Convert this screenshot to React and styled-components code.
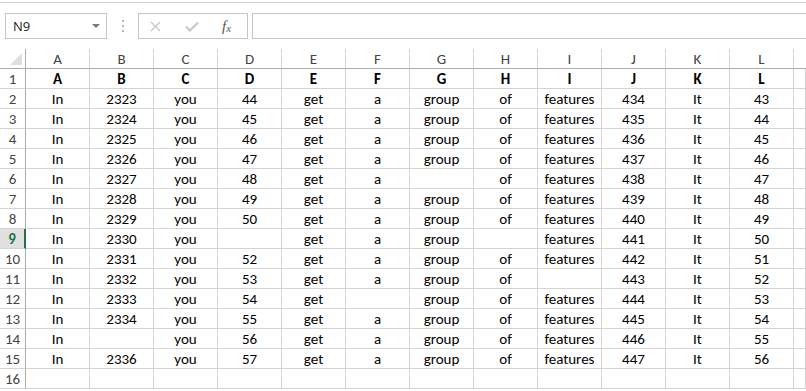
import React from "react";
import styled, { createGlobalStyle } from "styled-components";

const GlobalStyle = createGlobalStyle`
  html, body {
    margin: 0;
    padding: 0;
    background: #fff;
  }
  body {
    font-family: Calibri, Carlito, Lato, "Open Sans", sans-serif;
    overflow: hidden;
  }
`;

const COLUMNS = ["A", "B", "C", "D", "E", "F", "G", "H", "I", "J", "K", "L"];

// one array per sheet row, "" where the cell is empty
const ROWS = [
  ["In", "2323", "you", "44", "get", "a", "group", "of", "features", "434", "It", "43"],
  ["In", "2324", "you", "45", "get", "a", "group", "of", "features", "435", "It", "44"],
  ["In", "2325", "you", "46", "get", "a", "group", "of", "features", "436", "It", "45"],
  ["In", "2326", "you", "47", "get", "a", "group", "of", "features", "437", "It", "46"],
  ["In", "2327", "you", "48", "get", "a", "", "of", "features", "438", "It", "47"],
  ["In", "2328", "you", "49", "get", "a", "group", "of", "features", "439", "It", "48"],
  ["In", "2329", "you", "50", "get", "a", "group", "of", "features", "440", "It", "49"],
  ["In", "2330", "you", "", "get", "a", "group", "", "features", "441", "It", "50"],
  ["In", "2331", "you", "52", "get", "a", "group", "of", "features", "442", "It", "51"],
  ["In", "2332", "you", "53", "get", "a", "group", "of", "", "443", "It", "52"],
  ["In", "2333", "you", "54", "get", "", "group", "of", "features", "444", "It", "53"],
  ["In", "2334", "you", "55", "get", "a", "group", "of", "features", "445", "It", "54"],
  ["In", "", "you", "56", "get", "a", "group", "of", "features", "446", "It", "55"],
  ["In", "2336", "you", "57", "get", "a", "group", "of", "features", "447", "It", "56"],
  ["", "", "", "", "", "", "", "", "", "", "", ""],
];

const SELECTED_ROW = 9;

const App = () => {
  return (
    <Page>
      <GlobalStyle />
      <RibbonEdge />
      <FormulaBar>
        <NameBox>
          <span>N9</span>
          <DropArrow />
        </NameBox>
        <Grip>
          <i />
          <i />
          <i />
        </Grip>
        <FxGroup>
          <svg width="11" height="11" viewBox="0 0 11 11">
            <path d="M1 1 L10 10 M10 1 L1 10" stroke="#c6c6c6" strokeWidth="1.3" fill="none" />
          </svg>
          <svg width="14" height="11" viewBox="0 0 14 11">
            <path d="M1 5.5 L5 9.5 L13 1.5" stroke="#c6c6c6" strokeWidth="2" fill="none" />
          </svg>
          <FxLabel>
            f<sub>x</sub>
          </FxLabel>
        </FxGroup>
        <FormulaInput />
      </FormulaBar>

      <Sheet>
        <Corner>
          <CornerTriangle />
        </Corner>
        {COLUMNS.map((c) => (
          <ColHeader key={c}>{c}</ColHeader>
        ))}
        <ColHeader $last />

        <RowHeader>1</RowHeader>
        {COLUMNS.map((c) => (
          <Cell key={c} $bold>
            {c}
          </Cell>
        ))}
        <Cell />

        {ROWS.map((row, i) => {
          const num = i + 2;
          return (
            <React.Fragment key={num}>
              <RowHeader $selected={num === SELECTED_ROW}>{num}</RowHeader>
              {row.map((v, j) => (
                <Cell key={j}>{v}</Cell>
              ))}
              <Cell />
            </React.Fragment>
          );
        })}
      </Sheet>
    </Page>
  );
};

export default App;

const Page = styled.div`
  width: 806px;
  height: 391px;
  overflow: hidden;
  padding-top: 2px;
  box-sizing: border-box;
`;

const RibbonEdge = styled.div`
  border-top: 1px solid #d4d4d4;
`;

const FormulaBar = styled.div`
  display: flex;
  align-items: stretch;
  height: 26px;
  margin-top: 10px;
  padding-left: 5px;
`;

const NameBox = styled.div`
  box-sizing: border-box;
  width: 102px;
  border: 1px solid #c6c6c6;
  display: flex;
  align-items: center;
  justify-content: space-between;
  padding: 0 6px 0 7px;
  font-family: "Segoe UI", "Open Sans", "Noto Sans", sans-serif;
  font-size: 13px;
  color: #222;
`;

const DropArrow = styled.span`
  width: 0;
  height: 0;
  border-left: 4px solid transparent;
  border-right: 4px solid transparent;
  border-top: 4px solid #777;
`;

const Grip = styled.div`
  width: 31px;
  display: flex;
  flex-direction: column;
  align-items: center;
  justify-content: center;
  gap: 3px;
  i {
    display: block;
    width: 2px;
    height: 2px;
    background: #b5b5b5;
  }
`;

const FxGroup = styled.div`
  box-sizing: border-box;
  width: 110px;
  border: 1px solid #c6c6c6;
  display: flex;
  align-items: center;
  padding-left: 11px;
  gap: 24px;
`;

const FxLabel = styled.div`
  margin-left: -1px;
  font-family: "Liberation Serif", "DejaVu Serif", serif;
  font-style: italic;
  font-size: 15px;
  color: #555;
  sub {
    font-size: 11px;
    vertical-align: baseline;
    position: relative;
    top: 1px;
  }
`;

const FormulaInput = styled.div`
  flex: 1;
  margin-left: 4px;
  margin-right: -4px;
  border: 1px solid #c6c6c6;
`;

const Sheet = styled.div`
  margin-top: 10px;
  display: grid;
  grid-template-columns: 26px repeat(12, 64px) 1fr;
  grid-auto-rows: 20px;
`;

const HeaderBase = styled.div`
  box-sizing: border-box;
  display: flex;
  align-items: center;
  justify-content: center;
  font-size: 15px;
  color: #444;
  line-height: 1;
`;

const Corner = styled(HeaderBase)`
  position: relative;
  border-right: 1px solid #ababab;
  border-bottom: 1px solid #ababab;
`;

const CornerTriangle = styled.span`
  position: absolute;
  right: 3px;
  bottom: 3px;
  width: 0;
  height: 0;
  border-left: 12px solid transparent;
  border-bottom: 12px solid #dfdfdf;
`;

const ColHeader = styled(HeaderBase)`
  border-right: ${(p) => (p.$last ? "none" : "1px solid #d4d4d4")};
  border-bottom: 1px solid #ababab;
  padding-top: 1px;
`;

const RowHeader = styled(HeaderBase)`
  border-right: ${(p) => (p.$selected ? "2px solid #217346" : "1px solid #ababab")};
  border-bottom: 1px solid #d4d4d4;
  background: ${(p) => (p.$selected ? "#e1e1e1" : "#fff")};
  color: ${(p) => (p.$selected ? "#217346" : "#444")};
  font-weight: ${(p) => (p.$selected ? 700 : 400)};
  padding-top: 1px;
`;

const Cell = styled.div`
  box-sizing: border-box;
  border-right: 1px solid #d4d4d4;
  border-bottom: 1px solid #d4d4d4;
  display: flex;
  align-items: center;
  justify-content: center;
  font-size: 15px;
  font-weight: ${(p) => (p.$bold ? 700 : 400)};
  color: #000;
  padding-top: 1px;
  white-space: nowrap;
`;
